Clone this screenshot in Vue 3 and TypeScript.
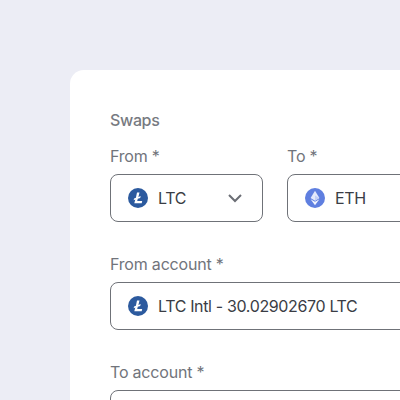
<template>
  <div class="page">
    <div class="card">
      <div class="heading">Swaps</div>

      <div class="row">
        <div class="field">
          <label>From *</label>
          <div class="box">
            <svg class="coin" viewBox="0 0 20 20">
              <circle cx="10" cy="10" r="10" fill="#2c5a9e" />
              <path d="M9 4.6h2.5L10.4 9l2.3-.9-.5 1.8-2.4.9-.6 2.3h5l-.5 2.2H6.3l1-3.7-1.7.6.5-1.7 1.8-.7z" fill="#fff" />
            </svg>
            <span>LTC</span>
            <svg class="chev" viewBox="0 0 16 16">
              <path d="M2 5l6 6 6-6" fill="none" stroke="#6b6e75" stroke-width="2" />
            </svg>
          </div>
        </div>
        <div class="field">
          <label>To *</label>
          <div class="box wide">
            <svg class="coin" viewBox="0 0 20 20">
              <circle cx="10" cy="10" r="10" fill="#5f7fe0" />
              <path d="M10 2.8l4.4 7.3L10 12.7l-4.4-2.6z" fill="#e4e9fb" />
              <path d="M10 13.8l4.4-2.6L10 17.2l-4.4-6z" fill="#f1f4fe" />
              <path d="M10 7.4l4.4 2.7L10 12.7z" fill="#c3cff5" />
            </svg>
            <span>ETH</span>
          </div>
        </div>
      </div>

      <div class="field account">
        <label>From account *</label>
        <div class="box full">
          <svg class="coin" viewBox="0 0 20 20">
            <circle cx="10" cy="10" r="10" fill="#2c5a9e" />
            <path d="M9 4.6h2.5L10.4 9l2.3-.9-.5 1.8-2.4.9-.6 2.3h5l-.5 2.2H6.3l1-3.7-1.7.6.5-1.7 1.8-.7z" fill="#fff" />
          </svg>
          <span>LTC Intl - 30.02902670 LTC</span>
        </div>
      </div>

      <div class="field account">
        <label>To account *</label>
        <div class="box full"></div>
      </div>
    </div>
  </div>
</template>

<script setup lang="ts">
</script>

<style>
html,
body {
  margin: 0;
  overflow: hidden;
}
</style>

<style scoped>
.page {
  width: 400px;
  height: 400px;
  overflow: hidden;
  box-sizing: border-box;
  padding: 70px 0 0 70px;
  background: #ecedf5;
  font-family: Inter, "Liberation Sans", sans-serif;
}

.card {
  width: 600px;
  height: 500px;
  box-sizing: border-box;
  padding: 40px;
  background: #fff;
  border-radius: 14px;
}

.heading {
  height: 22px;
  line-height: 20px;
  font-size: 16px;
  font-weight: 500;
  letter-spacing: -0.35px;
  color: #777a81;
  margin-bottom: 15px;
}

.row {
  display: flex;
  gap: 24px;
}

.field label {
  display: block;
  height: 27px;
  line-height: 18px;
  font-size: 16px;
  letter-spacing: -0.2px;
  color: #71747b;
}

.account {
  margin-top: 33px;
}

.box {
  display: flex;
  align-items: center;
  width: 153px;
  height: 48px;
  box-sizing: border-box;
  padding: 0 17px;
  border: 1px solid #6f7278;
  border-radius: 8px;
  font-size: 16px;
  letter-spacing: -0.35px;
  color: #3a3d45;
}

.wide {
  width: 200px;
}

.full {
  width: 400px;
}

.coin {
  width: 20px;
  height: 20px;
  margin-right: 10px;
  flex: none;
}

.chev {
  width: 16px;
  height: 16px;
  margin-left: auto;
  margin-right: 2px;
}
</style>
